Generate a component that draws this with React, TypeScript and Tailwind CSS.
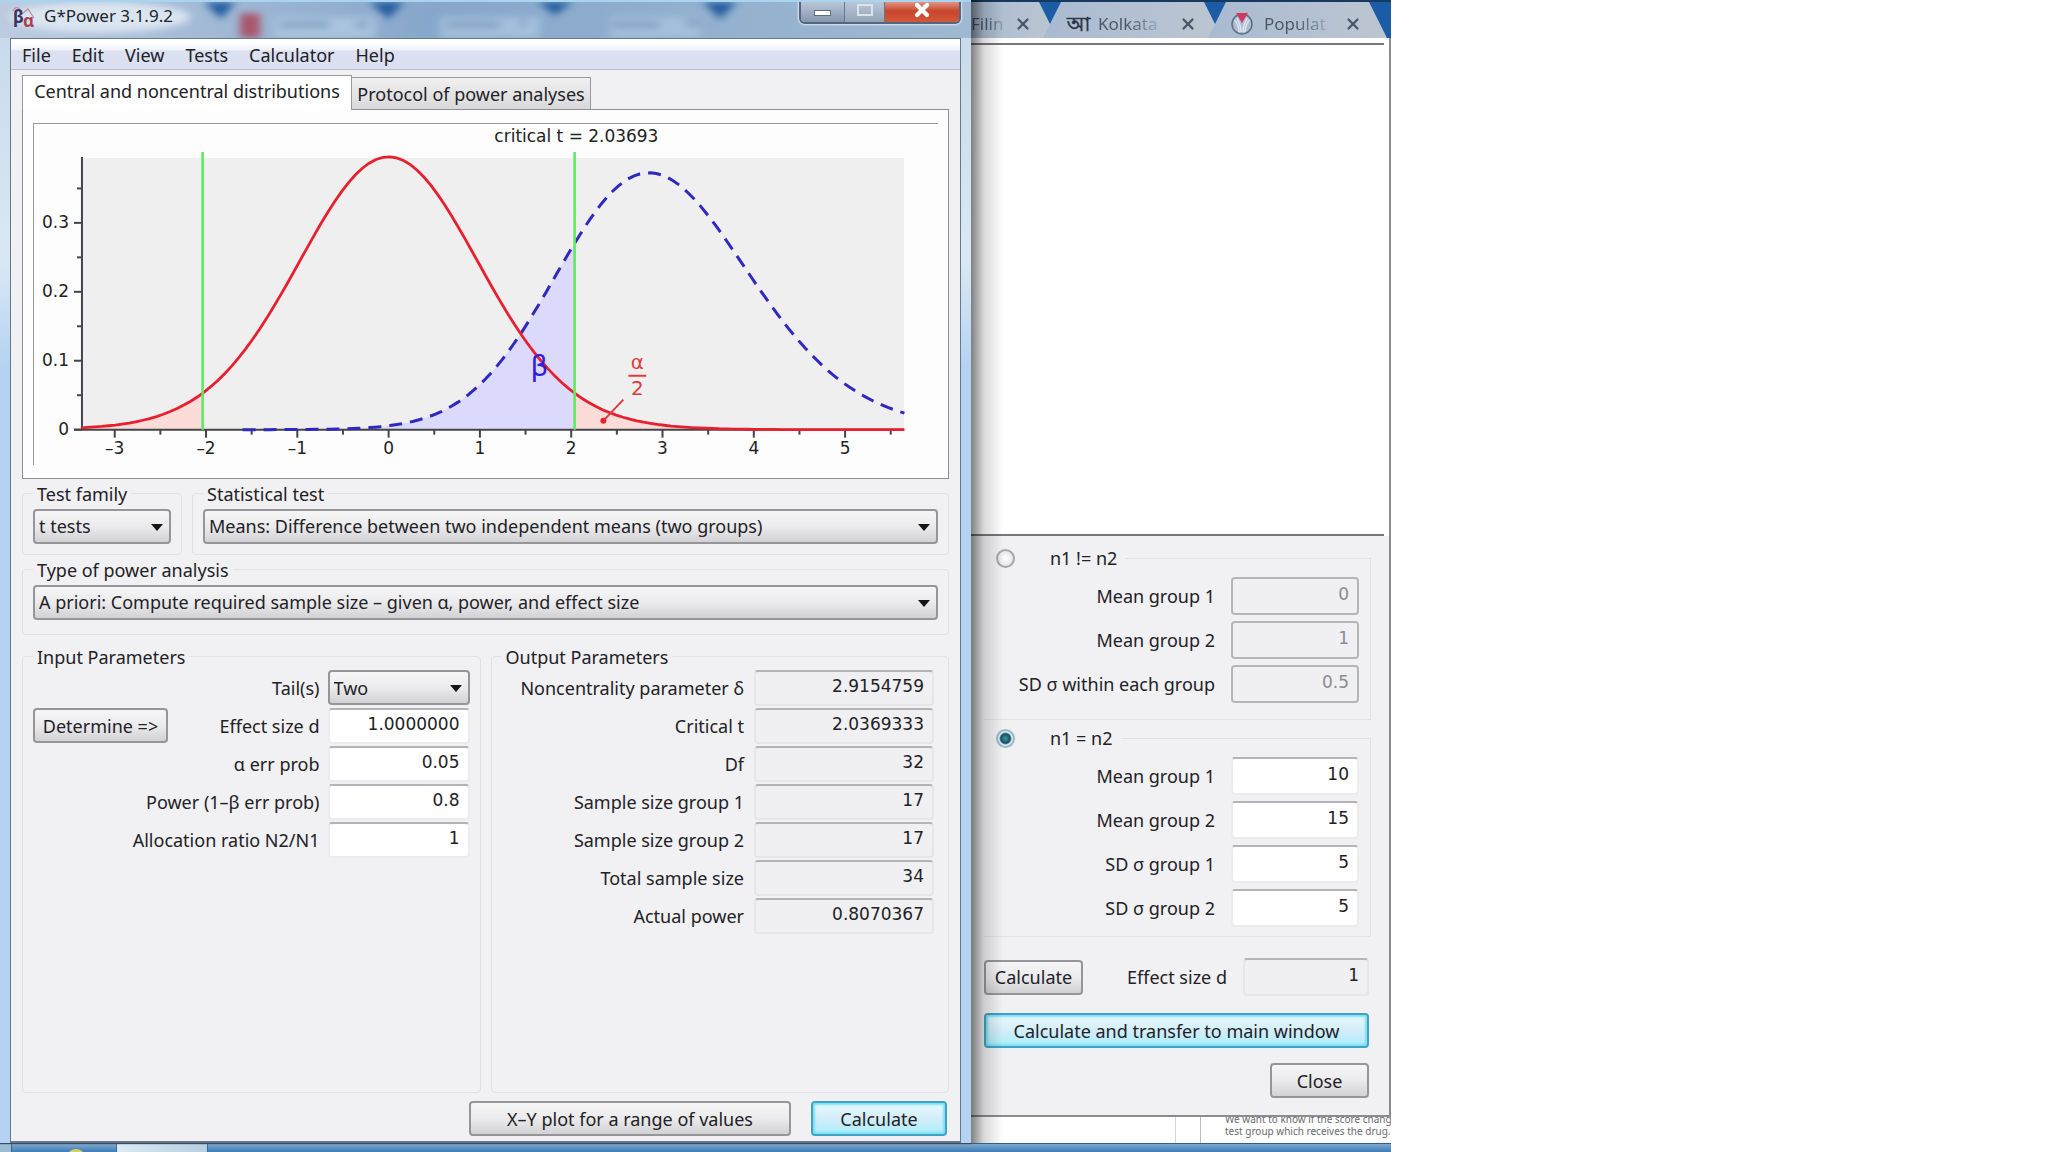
import { useId, type ReactNode } from 'react'
import { X } from 'lucide-react'

const DF = 32
const DELTA = 2.9154759
const CRITICAL_T = 2.0369333

// plot geometry, in viewBox units
const X0 = 355
const Y0 = 306
const X_UNIT = 91.4
const Y_UNIT = 690
const X_MIN = -3.37
const X_MAX = 5.65

const INPUT_ROWS = [
  { label: 'Effect size d', value: '1.0000000' },
  { label: 'α err prob', value: '0.05' },
  { label: 'Power (1–β err prob)', value: '0.8' },
  { label: 'Allocation ratio N2/N1', value: '1' },
]

const OUTPUT_ROWS = [
  { label: 'Noncentrality parameter δ', value: '2.9154759' },
  { label: 'Critical t', value: '2.0369333' },
  { label: 'Df', value: '32' },
  { label: 'Sample size group 1', value: '17' },
  { label: 'Sample size group 2', value: '17' },
  { label: 'Total sample size', value: '34' },
  { label: 'Actual power', value: '0.8070367' },
]

const UNEQUAL_ROWS = [
  { label: 'Mean group 1', value: '0' },
  { label: 'Mean group 2', value: '1' },
  { label: 'SD σ within each group', value: '0.5' },
]

const EQUAL_ROWS = [
  { label: 'Mean group 1', value: '10' },
  { label: 'Mean group 2', value: '15' },
  { label: 'SD σ group 1', value: '5' },
  { label: 'SD σ group 2', value: '5' },
]

// Weights of s = sqrt(chi2 / df), used to integrate the t densities
const S_GRID = (() => {
  const pts: { s: number; w: number }[] = []
  let total = 0
  for (let s = 0.4; s <= 1.7; s += 0.01) {
    const w = Math.exp((DF - 1) * Math.log(s) - (DF * (s * s - 1)) / 2)
    pts.push({ s, w })
    total += w
  }
  return pts.map((p) => ({ s: p.s, w: p.w / total }))
})()

function density(t: number, delta: number) {
  return S_GRID.reduce((sum, { s, w }) => {
    const z = t * s - delta
    return sum + (w * s * Math.exp(-0.5 * z * z)) / Math.sqrt(2 * Math.PI)
  }, 0)
}

const px = (t: number) => (X0 + t * X_UNIT).toFixed(1)
const py = (d: number) => (Y0 - d * Y_UNIT).toFixed(1)

function curve(delta: number, from: number, to: number) {
  const steps = 120
  const pts: string[] = []
  for (let i = 0; i <= steps; i++) {
    const t = from + ((to - from) * i) / steps
    pts.push(`${px(t)} ${py(density(t, delta))}`)
  }
  return `M${pts.join('L')}`
}

function area(delta: number, from: number, to: number) {
  return `${curve(delta, from, to)}L${px(to)} ${Y0}L${px(from)} ${Y0}Z`
}

function DistributionPlot() {
  const xTicks = Array.from({ length: 18 }, (_, i) => -3 + i * 0.5)
  const yTicks = Array.from({ length: 8 }, (_, i) => i * 0.05)

  return (
    <svg
      viewBox="0 0 905 341"
      className="block w-full h-auto font-['DejaVu_Sans',sans-serif] text-[17px]"
      role="img"
      aria-label="Central and noncentral t distributions"
    >
      <rect x="47" y="34" width="824" height="272" fill="#efefef" />
      <path d={area(0, X_MIN, -CRITICAL_T)} fill="#fbdcd9" />
      <path d={area(0, CRITICAL_T, X_MAX)} fill="#fbdcd9" />
      <path d={area(DELTA, X_MIN, CRITICAL_T)} fill="#dcdafc" />

      <g stroke="#44444a" strokeWidth="2">
        <path d="M48 33V306" />
        <path d={`M40 ${Y0}H871`} />
        {xTicks.map((t) => (
          <path key={t} d={`M${px(t)} ${Y0}v${t % 1 === 0 ? 8 : 5}`} />
        ))}
        {yTicks.map((d, i) => (
          <path key={i} d={`M48 ${py(d)}h${i % 2 === 0 ? -8 : -5}`} />
        ))}
      </g>

      <path d={curve(DELTA, -1.6, X_MAX)} fill="none" stroke="#3028c0" strokeWidth="3" strokeDasharray="13 8" />
      <path d={curve(0, X_MIN, X_MAX)} fill="none" stroke="#e8202e" strokeWidth="2.8" />
      <path d={`M${px(-CRITICAL_T)} 28V${Y0}M${px(CRITICAL_T)} 28V${Y0}`} stroke="#62e862" strokeWidth="2.6" />

      <g fill="#222" textAnchor="middle">
        {xTicks.filter((t) => t % 1 === 0).map((t) => (
          <text key={t} x={X0 + t * X_UNIT} y="330">
            {t < 0 ? `–${-t}` : t}
          </text>
        ))}
        <text x="543" y="18">critical t = 2.03693</text>
      </g>
      <g fill="#222" textAnchor="end">
        {['0', '0.1', '0.2', '0.3'].map((label, i) => (
          <text key={label} x="35" y={Y0 - i * 69 + 5}>{label}</text>
        ))}
      </g>

      <text x="506" y="252" textAnchor="middle" fontSize="28" fill="#2b20e0">β</text>
      <g fill="#e03a40" fontSize="20" textAnchor="middle">
        <text x="604" y="245">α</text>
        <text x="604" y="271">2</text>
      </g>
      <path d="M595 252H613M590 276L571 296" stroke="#e03a40" strokeWidth="2" />
      <circle cx="570" cy="297" r="3" fill="#ee2030" />
    </svg>
  )
}

function Group({ title, htmlFor, className = '', children }: { title: string; htmlFor?: string; className?: string; children: ReactNode }) {
  return (
    <fieldset className={`min-w-0 border border-[#e1e1e4] rounded-sm px-[10px] ${className}`}>
      <legend className="px-1 leading-6">
        {htmlFor ? <label htmlFor={htmlFor}>{title}</label> : title}
      </legend>
      {children}
    </fieldset>
  )
}

function Combo({ id, value, className = '' }: { id: string; value: string; className?: string }) {
  return (
    <div className={`relative ${className}`}>
      <select
        id={id}
        className="block w-full h-[35px] appearance-none truncate rounded border-2 border-[#96969a] bg-linear-to-b from-[#f6f6f7] via-[#ebebed] via-50% to-[#d2d1d4] pl-1 pr-6"
      >
        <option>{value}</option>
      </select>
      <svg viewBox="0 0 12 7" className="pointer-events-none absolute right-2 top-[15px] w-3 h-[7px]">
        <path d="M0 0H12L6 7Z" fill="#151515" />
      </svg>
    </div>
  )
}

interface FieldRowProps {
  label: string
  value: string
  kind?: 'editable' | 'output' | 'disabled'
  rowClass: string
  inputClass: string
  children?: ReactNode
}

const FIELD_STYLES = {
  editable: 'bg-white border-[#ececee] border-t-[#b4b4b8]',
  output: 'bg-[#f0eff2] border-[#e6e6e9] border-t-[#b4b4b8]',
  disabled: 'bg-[#f0eff2] border-[#b6b6ba] text-[#8c8c90]',
}

function FieldRow({ label, value, kind = 'editable', rowClass, inputClass, children }: FieldRowProps) {
  const id = useId()
  return (
    <div className={`flex items-center ${rowClass}`}>
      {children}
      <label htmlFor={id} className="ml-auto whitespace-nowrap">{label}</label>
      <input
        id={id}
        type="text"
        defaultValue={value}
        readOnly={kind === 'output'}
        disabled={kind === 'disabled'}
        className={`rounded-sm border-2 pb-1 text-right font-['DejaVu_Sans',sans-serif] text-[17px] ${FIELD_STYLES[kind]} ${inputClass}`}
      />
    </div>
  )
}

function Button({ primary = false, className = '', children }: { primary?: boolean; className?: string; children: ReactNode }) {
  return (
    <button
      type="button"
      className={`h-[35px] rounded border-2 whitespace-nowrap ${primary
        ? 'border-[#3fa3c4] bg-linear-to-b from-[#e6fafd] via-[#d3edf9] via-50% to-[#a9eefb] shadow-[inset_0_0_2px_2px_#7fe0f5]'
        : 'border-[#96969a] bg-linear-to-b from-[#f6f6f7] via-[#ebebed] via-50% to-[#d2d1d4]'
        } ${className}`}
    >
      {children}
    </button>
  )
}

function TitleBar() {
  return (
    <header className="relative flex h-[38px] items-start overflow-hidden border-t-2 border-[#a9d4ef] bg-linear-to-r from-[#bccbe0] via-[#86a7cb] via-45% to-[#9fb9d2]">
      {/* glass: tabs of the browser behind the window */}
      <svg viewBox="0 0 971 38" preserveAspectRatio="none" className="absolute inset-0 w-full h-full">
        <defs>
          <filter id="glass" x="-20%" y="-50%" width="140%" height="200%">
            <feGaussianBlur stdDeviation="4" />
          </filter>
        </defs>
        <g filter="url(#glass)">
          <ellipse cx="100" cy="16" rx="90" ry="16" fill="#dbe5f1" />
          <rect x="275" y="16" width="100" height="22" fill="#a9c4de" />
          <rect x="440" y="16" width="100" height="22" fill="#a3c0dc" />
          <rect x="610" y="16" width="90" height="22" fill="#a3c0dc" />
          <path d="M204 0H236L221 18ZM370 0H404L388 18ZM538 0H572L555 14ZM703 0H737L720 18Z" fill="#235c9e" />
          <rect x="240" y="12" width="20" height="26" fill="#a8566a" />
          <path d="M280 24H330M446 24H500M520 22H526M612 24H660M686 22H700M355 24H368" stroke="#7b9bc0" strokeWidth="6" />
        </g>
      </svg>
      <svg viewBox="0 0 24 24" className="relative mt-1 ml-3 w-6 h-6 overflow-visible" aria-hidden="true">
        <path d="M1 5C5 -2 8 3 10 8L16 3L22 12" fill="none" stroke="#c487a0" strokeWidth="1.2" />
        <text x="1" y="17" fontSize="17" fontWeight="700" fill="#3b3160">β</text>
        <text x="11" y="21" fontSize="17" fontWeight="700" fill="#a8434e">α</text>
      </svg>
      <h1 className="relative ml-2 mt-0.5 text-[17px] leading-6 text-[#20242c]">G*Power 3.1.9.2</h1>
      <div className="relative ml-auto mr-[10px] flex h-[22px] overflow-hidden rounded-b-md border-2 border-t-0 border-[#55677f] shadow-[0_0_2px_1px_#dfe9f3]">
        <button type="button" aria-label="Minimize" className="flex w-11 items-end justify-center border-r border-[#64778f] bg-linear-to-b from-[#b9c6d6] to-[#8598ae] pb-1.5">
          <span className="h-[6px] w-[17px] border border-[#5d6c80] bg-white" />
        </button>
        <button type="button" aria-label="Maximize" className="flex w-10 items-center justify-center border-r border-[#64778f] bg-linear-to-b from-[#b9c6d6] to-[#93a4b9]">
          <span className="mb-1 h-3 w-4 border-2 border-[#d9e3ee]" />
        </button>
        <button type="button" aria-label="Close" className="flex w-[74px] items-start justify-center bg-linear-to-b from-[#df9384] via-[#c8452a] via-45% to-[#d2583a] text-white">
          <X className="-mt-0.5 h-5 w-5" strokeWidth={5} />
        </button>
      </div>
    </header>
  )
}

function MainWindow() {
  return (
    <section className="relative flex flex-col bg-[#bcd6ef] shadow-[0_0_1px_1px_#3c4a5c]">
      <TitleBar />
      <div className="flex flex-1 bg-linear-to-b from-[#c9daea] via-[#dbe8f4] via-20% to-[#b4d2f2] to-30% px-[10px]">
        <div className="flex min-w-0 flex-1 flex-col border border-b-2 border-[#66788c] bg-[#f1f0f2]">
          <nav className="flex h-[31px] items-center gap-[21px] border-b border-[#bcbfce] bg-linear-to-b from-white from-10% via-[#f0f3fa] via-35% to-[#dce1f2] to-40% pl-[11px] pt-0.5">
            {['File', 'Edit', 'View', 'Tests', 'Calculator', 'Help'].map((item) => (
              <button key={item} type="button">{item}</button>
            ))}
          </nav>

          <div className="flex flex-1 flex-col px-[11px] pt-[5px]">
            <div role="tablist" className="flex items-end">
              <button role="tab" aria-selected="true" type="button" className="relative -mb-px h-[35px] w-[330px] border border-b-0 border-[#9a9a9e] bg-white pb-1">
                Central and noncentral distributions
              </button>
              <button role="tab" aria-selected="false" type="button" className="h-8 w-[239px] border border-l-0 border-b-0 border-[#9a9a9e] bg-linear-to-b from-[#f0f0f1] to-[#d9d9db]">
                Protocol of power analyses
              </button>
            </div>
            <div className="border border-[#8f8f93] bg-[#fdfdfe] px-[10px] py-[13px]">
              <div className="border-l border-t border-[#98989c]">
                <DistributionPlot />
              </div>
            </div>

            <div className="mt-[3px] flex gap-[10px]">
              <Group title="Test family" htmlFor="family" className="w-[160px] pt-[3px] pb-[10px]">
                <Combo id="family" value="t tests" />
              </Group>
              <Group title="Statistical test" htmlFor="test" className="flex-1 pt-[3px] pb-[10px]">
                <Combo id="test" value="Means: Difference between two independent means (two groups)" />
              </Group>
            </div>
            <Group title="Type of power analysis" htmlFor="analysis" className="mt-[3px] pt-[3px] pb-[14px]">
              <Combo id="analysis" value="A priori: Compute required sample size – given α, power, and effect size" />
            </Group>

            <div className="mt-[10px] flex flex-1 gap-[10px]">
              <Group title="Input Parameters" className="flex-1">
                <div className="flex h-[38px] items-center">
                  <label htmlFor="tails" className="ml-auto">Tail(s)</label>
                  <Combo id="tails" value="Two" className="ml-2 w-[142px]" />
                </div>
                {INPUT_ROWS.map((row, i) => (
                  <FieldRow key={row.label} {...row} rowClass="h-[38px]" inputClass="ml-2 w-[142px] h-9 pr-2">
                    {i === 0 && <Button className="w-[135px]">Determine =&gt;</Button>}
                  </FieldRow>
                ))}
              </Group>
              <Group title="Output Parameters" className="flex-1">
                {OUTPUT_ROWS.map((row) => (
                  <FieldRow key={row.label} {...row} kind="output" rowClass="h-[38px] pr-1" inputClass="ml-[10px] w-[180px] h-9 pr-2" />
                ))}
              </Group>
            </div>

            <footer className="flex justify-end gap-5 pt-2 pb-[5px] pr-0.5">
              <Button className="w-[322px]">X–Y plot for a range of values</Button>
              <Button primary className="w-[136px]">Calculate</Button>
            </footer>
          </div>
        </div>
      </div>
    </section>
  )
}

function BrowserTab({ icon, title, className = '' }: { icon?: ReactNode; title: string; className?: string }) {
  return (
    <div className={`flex shrink-0 items-center bg-linear-to-r from-[#a9bad1] to-[#bcc6d1] pt-2 ${className}`}>
      {icon}
      <span className="bg-linear-to-r from-[#4b5668] from-50% to-[#9aa6b8] bg-clip-text text-transparent">{title}</span>
      <button type="button" aria-label={`Close ${title}`} className="ml-auto mr-[25px] text-[#4a5468]">
        <X className="h-[18px] w-[18px]" strokeWidth={3} />
      </button>
    </div>
  )
}

function ModeGroup({ title, checked = false, rows, className = '' }: { title: string; checked?: boolean; rows: typeof EQUAL_ROWS; className?: string }) {
  return (
    <fieldset className={`border border-l-0 border-[#e1e1e4] pt-1 pr-[11px] ${className}`}>
      <legend className="pr-2 leading-6">
        <label className="flex items-center">
          <input
            type="radio"
            name="mode"
            defaultChecked={checked}
            className="ml-3 mr-[35px] h-[19px] w-[19px] appearance-none rounded-full border-2 border-[#a8a8ac] bg-radial from-white to-[#dcdcde] checked:border-[#9fb8c4] checked:from-[#2f8f9c] checked:from-10% checked:via-[#1d4a5a] checked:via-45% checked:to-[#c9eef6] checked:to-60%"
          />
          {title}
        </label>
      </legend>
      {rows.map((row) => (
        <FieldRow
          key={row.label}
          {...row}
          kind={checked ? 'editable' : 'disabled'}
          rowClass="h-11"
          inputClass="ml-4 w-[128px] h-[38px] pr-2"
        />
      ))}
    </fieldset>
  )
}

function EffectSizeDrawer() {
  return (
    <section className="relative flex min-w-0 flex-col overflow-hidden">
      <div className="flex h-[38px] border-t-2 border-[#16395f] bg-[#1c5ba6] text-[17px]">
        <BrowserTab title="Filin" className="w-[86px] [clip-path:polygon(0_0,calc(100%-18px)_0,100%_100%,0_100%)]" />
        <BrowserTab
          title="Kolkata"
          className="-ml-[14px] w-[179px] [clip-path:polygon(18px_0,calc(100%-18px)_0,100%_100%,0_100%)]"
          icon={<span className="ml-6 mr-2 text-xl leading-5 font-bold text-[#2f3846]">আ</span>}
        />
        <BrowserTab
          title="Populat"
          className="-ml-[14px] w-[179px] [clip-path:polygon(18px_0,calc(100%-18px)_0,100%_100%,0_100%)]"
          icon={
            <svg viewBox="0 0 24 24" className="ml-[22px] mr-2.5 w-6 h-6" fill="none" aria-hidden="true">
              <circle cx="12" cy="12" r="10" stroke="#5b6f8c" strokeWidth="1.5" />
              <path d="M5 8C7 13 9 12 9 20M19 8C17 13 15 12 15 20M7 6C9 12 11 12 11 20M17 6C15 12 13 12 13 20" stroke="#dfe6ee" strokeWidth="1.5" />
              <path d="M6 1H18L12 11Z" fill="#d2385c" />
            </svg>
          }
        />
      </div>

      <div className="flex flex-1 flex-col border-b-2 border-r-2 border-[#8b8b90] bg-[#f1f0f2]">
        <div className="flex-1 bg-white pr-[5px] pt-[5px]">
          <div className="h-full border-y-2 border-[#75777a]" />
        </div>
        <div className="px-[13px] pt-[10px]">
          <ModeGroup title="n1 != n2" rows={UNEQUAL_ROWS} className="pb-[13px] mr-[5px]" />
          <ModeGroup title="n1 = n2" checked rows={EQUAL_ROWS} className="mt-[6px] mr-[5px] pb-[6px]" />
          <div className="mt-5 mr-[7px]">
            <FieldRow label="Effect size d" value="1" kind="output" rowClass="h-10" inputClass="ml-4 w-[126px] h-[38px] pr-2">
              <Button className="w-[99px]">Calculate</Button>
            </FieldRow>
            <Button primary className="mt-4 w-full">Calculate and transfer to main window</Button>
            <div className="flex justify-end pt-[15px] pb-[17px]">
              <Button className="w-[99px]">Close</Button>
            </div>
          </div>
        </div>
      </div>

      <div className="flex h-[26px] overflow-hidden bg-white">
        <div className="w-[205px] shrink-0 border-r border-[#d4d4d6]" />
        <div className="w-[25px] shrink-0 border-r border-[#bcbcc0]" />
        <p className="-mt-1 ml-6 text-[10px] leading-3 whitespace-nowrap text-[#6a6a6e]">
          We want to know if the score chang
          <br />
          test group which receives the drug.
        </p>
      </div>

      {/* shadow cast by the main window */}
      <div className="pointer-events-none absolute inset-y-0 left-0 w-8 bg-linear-to-r from-black/50 via-black/15 via-40% to-transparent" />
    </section>
  )
}

function Taskbar() {
  return (
    <footer className="col-span-2 flex h-[9px] overflow-hidden border-t border-[#2e5e92] bg-linear-to-b from-[#7fa8cc] to-[#3b7cb8]">
      <div className="w-3 border-r border-[#41607f] bg-[#9dbbd6]" />
      <div className="ml-[54px] mt-[5px] h-5 w-5 rounded-full bg-[#d8d26a]" />
      <div className="ml-[30px] w-[92px] border-x border-[#3d6c98] bg-linear-to-r from-[#dcebf5] to-[#b4cfe2]" />
    </footer>
  )
}

export default function App() {
  return (
    <main className="grid min-h-screen grid-cols-[971fr_420fr_657fr] grid-rows-[1fr_auto] bg-white font-['Noto_Sans','Open_Sans',sans-serif] text-lg text-[#222226]">
      <MainWindow />
      <EffectSizeDrawer />
      <div className="row-span-2" />
      <Taskbar />
    </main>
  )
}
